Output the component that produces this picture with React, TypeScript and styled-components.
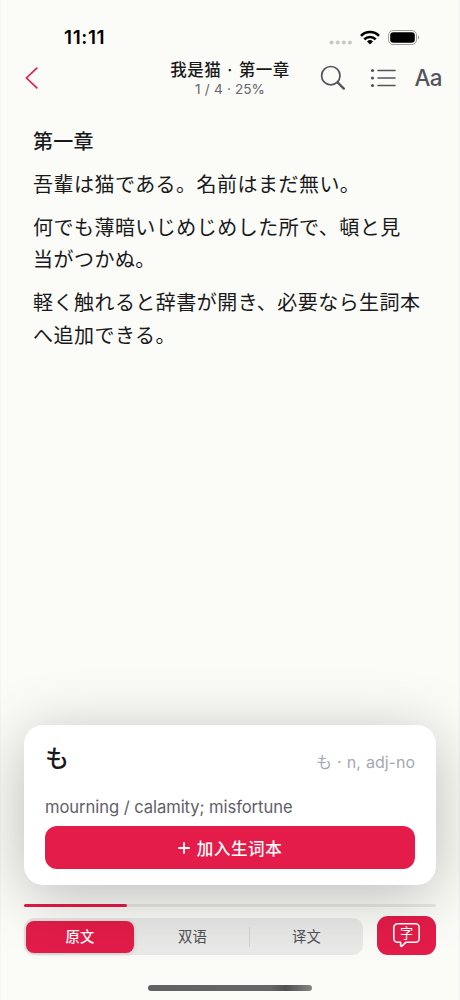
import React from 'react';
import styled, { createGlobalStyle } from 'styled-components';

const Global = createGlobalStyle`
  * { box-sizing: border-box; }
  body { margin: 0; background: #fbfcf7; }
  button { border: 0; padding: 0; background: none; font: inherit; color: inherit; }
`;

const Screen = styled.div`
  width: 460px;
  height: 1000px;
  overflow: hidden;
  display: flex;
  flex-direction: column;
  background: #fbfcf7;
  box-shadow: inset 1px 0 #f5f6f2, inset -1px 0 #f1f2f0;
  color: #19191c;
  font-family: Inter, 'Noto Sans CJK SC', sans-serif;
`;

const StatusBar = styled.div`
  height: 54px;
  padding: 21px 40px 0 64px;
  display: flex;
  justify-content: space-between;
  align-items: center;
`;

const Clock = styled.span`
  font-size: 19px;
  line-height: 33px;
  font-weight: 600;
  letter-spacing: 0.6px;
  color: #000;
`;

const NavBar = styled.header`
  height: 56px;
  padding: 0 18px 0 24px;
  display: grid;
  grid-template-columns: 115px 1fr 130px;
  align-items: center;
`;

const BackButton = styled.button`
  display: flex;
  height: 24px;
  margin-bottom: 8px;
`;

const Heading = styled.div`
  text-align: center;
  padding: 0 0 7px 9px;
  margin: 0 -4px;
  white-space: nowrap;
`;

const Title = styled.div`
  font-size: 16.5px;
  line-height: 21px;
  font-weight: 500;
  letter-spacing: 0.5px;
  word-spacing: 1.2px;
`;

const Position = styled.div`
  font-size: 13.6px;
  line-height: 17px;
  word-spacing: 0.4px;
  color: #65656c;
`;

const Tools = styled.div`
  display: flex;
  justify-content: flex-end;
  align-items: center;
  height: 40px;
  margin-bottom: 8px;
  color: #54535d;
`;

const Tool = styled.button<{ $gap?: number }>`
  display: flex;
  margin-left: ${(p) => p.$gap ?? 0}px;
`;

const TextSize = styled.button`
  margin-left: 18px;
  font-size: 22.4px;
  line-height: 40px;
  font-weight: 450;
  letter-spacing: -0.5px;
`;

const Reader = styled.main`
  flex: 1;
  padding: 15px 33px 0;
  font-family: 'Noto Sans CJK JP', sans-serif;
  font-size: 20px;
  line-height: 32.3px;
  letter-spacing: 0.47px;
`;

const ChapterTitle = styled.h1`
  margin: 0 0 10.6px;
  font: inherit;
  font-weight: 500;
  letter-spacing: 0.2px;
`;

const Paragraph = styled.p`
  margin: 0 -4px 10.8px 0;
`;

const WordCard = styled.section`
  position: relative;
  z-index: 1;
  height: 160px;
  margin: 0 24px;
  padding: 15px 21px;
  border-radius: 19px;
  background: #fff;
  box-shadow: 0 10px 62px rgba(0, 0, 0, 0.26);
`;

const WordRow = styled.div`
  display: flex;
  justify-content: space-between;
  align-items: flex-start;
  height: 52px;
`;

const Word = styled.span`
  font: 500 24px/34px 'Noto Sans CJK JP', sans-serif;
`;

const Reading = styled.span`
  font-family: Inter, 'Noto Sans CJK JP', sans-serif;
  font-size: 16px;
  line-height: 24px;
  margin-top: 10px;
  word-spacing: 0.6px;
  color: #a4a9b3;
`;

const Meaning = styled.div`
  height: 34px;
  font-size: 16.6px;
  line-height: 31px;
  letter-spacing: -0.07px;
  color: #606067;
`;

const AddButton = styled.button`
  width: 100%;
  height: 43px;
  display: flex;
  align-items: center;
  justify-content: center;
  gap: 7px;
  border-radius: 12px;
  background: #e31c49;
  color: #fff;
  font-size: 16.6px;
  font-weight: 500;
  letter-spacing: 0.5px;
`;

const Progress = styled.div`
  height: 3.4px;
  margin: 19px 24px 8.6px;
  border-radius: 2px;
  background: #e8e8e6;
`;

const ProgressFill = styled.div`
  width: 25%;
  height: 100%;
  border-radius: 2px;
  background: #e31c49;
`;

const Controls = styled.div`
  height: 39px;
  margin: 0 24px;
  display: flex;
  gap: 14px;
  align-items: flex-end;
`;

const Segments = styled.div`
  flex: 1;
  height: 37px;
  padding: 2px;
  display: grid;
  grid-template-columns: 108px 115px 1px 1fr;
  align-items: center;
  border-radius: 10px;
  background: #e9e9e8;
`;

const Segment = styled.button<{ $active?: boolean }>`
  height: 32px;
  border-radius: 8px;
  font-size: 14.4px;
  letter-spacing: 0.2px;
  line-height: 32px;
  padding-left: ${(p) => (p.$active ? 0 : 2)}px;
  font-weight: ${(p) => (p.$active ? 500 : 400)};
  color: ${(p) => (p.$active ? '#fff' : '#515157')};
  background: ${(p) => (p.$active ? '#e31c49' : 'transparent')};
  box-shadow: ${(p) => (p.$active ? '0 1px 5px rgba(0, 0, 0, 0.14)' : 'none')};
`;

const Divider = styled.span`
  height: 20px;
  background: #d3d3d3;
`;

const Lookup = styled.button`
  width: 59px;
  height: 39px;
  display: flex;
  align-items: center;
  justify-content: center;
  border-radius: 11px;
  background: #e31c49;
`;

const HomeArea = styled.div`
  height: 45px;
  padding: 30px 0 0 148px;
`;

const HomeIndicator = styled.div`
  width: 164px;
  height: 6px;
  border-radius: 3px;
  background: linear-gradient(90deg, #616161, #666 75%, #505050 84%, #858585);
`;

const StatusIcons = () => (
  <svg width="92" height="20" viewBox="328 28 92 20" fill="none">
    <g fill="#c8c8c5">
      {[331.6, 337.7, 343.8, 349.9].map((x) => (
        <circle key={x} cx={x} cy="42.5" r="2" />
      ))}
    </g>
    <g stroke="#000" strokeWidth="2.6">
      <path d="M361 35.8a12.7 12.7 0 0 1 18 0" />
      <path d="M364.3 39.4a8 8 0 0 1 11.4 0" />
    </g>
    <path d="M370 44.4l-3-2.9a4.3 4.3 0 0 1 6 0z" fill="#000" />
    <rect x="388.5" y="30.5" width="28" height="14" rx="4.6" stroke="#9d9d9a" />
    <rect x="390.2" y="32.2" width="24.6" height="10.6" rx="3.2" fill="#000" />
    <path d="M418 35.5c1.6.6 1.6 3.4 0 4z" fill="#9d9d9a" />
  </svg>
);

export default function App() {
  return (
    <>
      <Global />
      <Screen>
        <StatusBar>
          <Clock>11:11</Clock>
          <StatusIcons />
        </StatusBar>
        <NavBar>
          <BackButton aria-label="返回">
            <svg width="16" height="24" viewBox="0 0 16 24" fill="none" stroke="#e31c49" strokeWidth="1.7" strokeLinecap="round" strokeLinejoin="round">
              <path d="M12.8 2.2L2.4 12l10.4 9.8" />
            </svg>
          </BackButton>
          <Heading>
            <Title>我是猫 · 第一章</Title>
            <Position>1 / 4 · 25%</Position>
          </Heading>
          <Tools>
            <Tool aria-label="搜索">
              <svg width="26" height="26" viewBox="0 0 26 26" fill="none" stroke="currentColor" strokeLinecap="round">
                <circle cx="11.8" cy="10.7" r="9.2" strokeWidth="1.7" />
                <path d="M18.6 17.4l6.2 6.2" strokeWidth="2.3" />
              </svg>
            </Tool>
            <Tool $gap={24} aria-label="目录">
              <svg width="27" height="22" viewBox="0 0 27 22" fill="none" stroke="currentColor" strokeWidth="1.6" strokeLinecap="round">
                <path d="M9 3.5h17M9 11h17M9 18.5h17" />
                <g fill="currentColor" stroke="none">
                  <circle cx="3.5" cy="3.5" r="1.6" />
                  <circle cx="3.5" cy="11" r="1.6" />
                  <circle cx="3.5" cy="18.5" r="1.6" />
                </g>
              </svg>
            </Tool>
            <TextSize>Aa</TextSize>
          </Tools>
        </NavBar>
        <Reader lang="ja">
          <ChapterTitle>第一章</ChapterTitle>
          <Paragraph>吾輩は猫である。名前はまだ無い。</Paragraph>
          <Paragraph>何でも薄暗いじめじめした所で、頓と見<br />当がつかぬ。</Paragraph>
          <Paragraph>軽く触れると辞書が開き、必要なら生詞本<br />へ追加できる。</Paragraph>
        </Reader>
        <WordCard>
          <WordRow>
            <Word lang="ja">も</Word>
            <Reading>も · n, adj-no</Reading>
          </WordRow>
          <Meaning>mourning / calamity; misfortune</Meaning>
          <AddButton>
            <svg width="12" height="12" viewBox="0 0 12 12" stroke="#fff" strokeWidth="1.8" strokeLinecap="round">
              <path d="M6 1v10M1 6h10" />
            </svg>
            加入生词本
          </AddButton>
        </WordCard>
        <Progress>
          <ProgressFill />
        </Progress>
        <Controls>
          <Segments>
            <Segment $active>原文</Segment>
            <Segment>双语</Segment>
            <Divider />
            <Segment>译文</Segment>
          </Segments>
          <Lookup aria-label="查词">
            <svg width="29" height="27" viewBox="0 0 29 27" fill="none">
              <path d="M5.5 1.8h18a3.7 3.7 0 0 1 3.7 3.7v11a3.7 3.7 0 0 1-3.7 3.7H14l-4.1 3.9c-.6.5-1.3.3-1.3-.5v-3.4H5.5a3.7 3.7 0 0 1-3.7-3.7v-11a3.7 3.7 0 0 1 3.7-3.7z" stroke="#fff" strokeWidth="1.6" strokeLinejoin="round" />
              <text x="14.5" y="15.8" textAnchor="middle" fill="#fff" fontSize="13.2" fontWeight="400" fontFamily="'Noto Sans CJK SC', sans-serif">字</text>
            </svg>
          </Lookup>
        </Controls>
        <HomeArea>
          <HomeIndicator />
        </HomeArea>
      </Screen>
    </>
  );
}
